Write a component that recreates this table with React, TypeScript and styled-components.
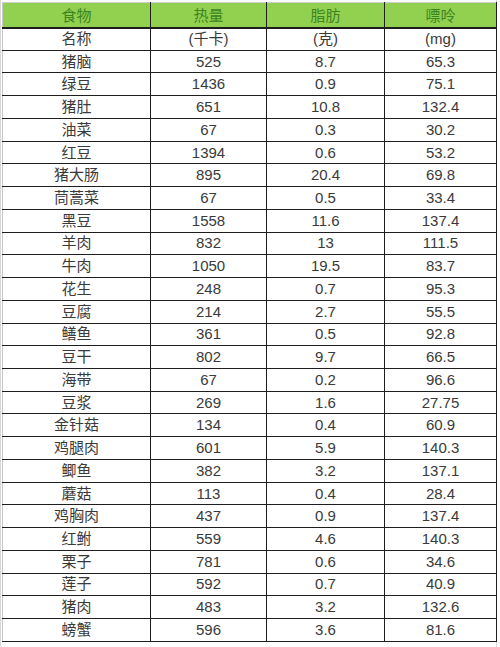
import React from 'react'
import styled, { createGlobalStyle } from 'styled-components'

const GlobalStyle = createGlobalStyle`
  html, body {
    margin: 0;
    padding: 0;
    background: #ffffff;
  }
  body {
    width: 500px;
    height: 647px;
    overflow: hidden;
    font-family: "Liberation Sans", "Noto Sans CJK SC", sans-serif;
  }
`

const Sheet = styled.div`
  width: 500px;
  height: 647px;
  padding: 2px 0 0 2px;
  box-sizing: border-box;
  background-color: #fdfdfd;
  background-image: linear-gradient(to right, #d8d8d8 1px, transparent 1px);
  background-size: 496px 100%;
  background-position: 496px 0;
`

const Table = styled.table`
  border-collapse: collapse;
  table-layout: fixed;
  width: 494px;
  border-left: 1px solid #c8c8c8;
  border-top: 1px solid #c8c8c8;
`

const HeadRow = styled.tr`
  height: 25px;
  background: #92d050;
`

const HeadCell = styled.th<{ $first?: boolean }>`
  padding: 0;
  font-weight: normal;
  font-size: 15px;
  color: #3b8420;
  text-align: center;
  border-bottom: 2px solid #1e1e1e;
  border-left: ${p => (p.$first ? 'none' : '1.5px solid #1e1e1e')};
  border-right: 1.5px solid #1e1e1e;
  border-top: 1px solid #d0d0d0;
`

const Row = styled.tr`
  height: 22.74px;
  background: #ffffff;
`

const Cell = styled.td<{ $first?: boolean }>`
  padding: 0;
  font-size: 15px;
  color: #3a3a3a;
  text-align: center;
  line-height: 20px;
  border-bottom: 1.5px solid #1e1e1e;
  border-left: ${p => (p.$first ? '1px solid #c8c8c8' : '1.5px solid #1e1e1e')};
  border-right: 1.5px solid #1e1e1e;
`

const columns = [
  { title: '食物', width: 148 },
  { title: '热量', width: 116 },
  { title: '脂肪', width: 118 },
  { title: '嘌呤', width: 112 },
]

const rows: string[][] = [
  ['名称', '(千卡)', '(克)', '(mg)'],
  ['猪脑', '525', '8.7', '65.3'],
  ['绿豆', '1436', '0.9', '75.1'],
  ['猪肚', '651', '10.8', '132.4'],
  ['油菜', '67', '0.3', '30.2'],
  ['红豆', '1394', '0.6', '53.2'],
  ['猪大肠', '895', '20.4', '69.8'],
  ['茼蒿菜', '67', '0.5', '33.4'],
  ['黑豆', '1558', '11.6', '137.4'],
  ['羊肉', '832', '13', '111.5'],
  ['牛肉', '1050', '19.5', '83.7'],
  ['花生', '248', '0.7', '95.3'],
  ['豆腐', '214', '2.7', '55.5'],
  ['鳝鱼', '361', '0.5', '92.8'],
  ['豆干', '802', '9.7', '66.5'],
  ['海带', '67', '0.2', '96.6'],
  ['豆浆', '269', '1.6', '27.75'],
  ['金针菇', '134', '0.4', '60.9'],
  ['鸡腿肉', '601', '5.9', '140.3'],
  ['鲫鱼', '382', '3.2', '137.1'],
  ['蘑菇', '113', '0.4', '28.4'],
  ['鸡胸肉', '437', '0.9', '137.4'],
  ['红鲋', '559', '4.6', '140.3'],
  ['栗子', '781', '0.6', '34.6'],
  ['莲子', '592', '0.7', '40.9'],
  ['猪肉', '483', '3.2', '132.6'],
  ['螃蟹', '596', '3.6', '81.6'],
]

const App: React.FC = () => {
  return (
    <>
      <GlobalStyle />
      <Sheet>
        <Table>
          <colgroup>
            {columns.map(c => (
              <col key={c.title} style={{ width: c.width }} />
            ))}
          </colgroup>
          <thead>
            <HeadRow>
              {columns.map((c, i) => (
                <HeadCell key={c.title} $first={i === 0}>{c.title}</HeadCell>
              ))}
            </HeadRow>
          </thead>
          <tbody>
            {rows.map(r => (
              <Row key={r[0]}>
                {r.map((v, i) => (
                  <Cell key={i} $first={i === 0}>{v}</Cell>
                ))}
              </Row>
            ))}
          </tbody>
        </Table>
      </Sheet>
    </>
  )
}

export default App
